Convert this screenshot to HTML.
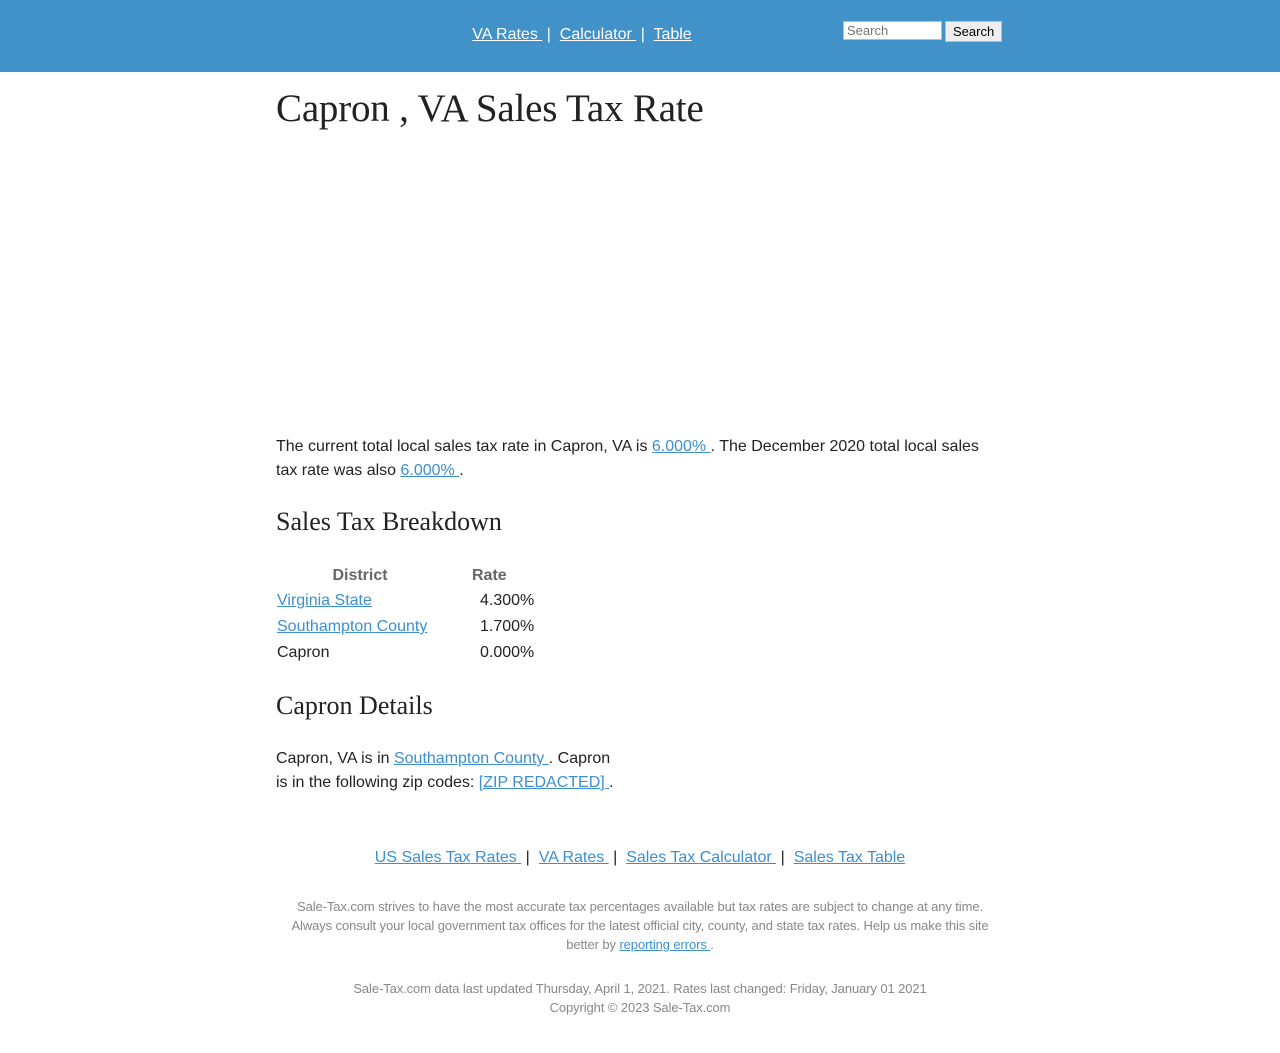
<!DOCTYPE html>
<html><head><meta charset="utf-8"><style>
body{margin:0;font-family:"Liberation Sans",sans-serif;color:#222;background:#fff}
a{color:#3d8fd0}
.hdr{background:#4192c8;height:72px;position:relative}
.nav{position:absolute;left:0;width:1164px;top:26px;text-align:center;font-size:16px;color:#fff}
.nav a{color:#fff}
.srch{position:absolute;left:843px;top:21px}
.srch input{width:91px;height:17px;border:1px solid #bbb;font:13px "Liberation Sans",sans-serif;padding:0 3px;vertical-align:top}
.srch button{height:21px;margin-left:3px;font:13px "Liberation Sans",sans-serif;background:#eee;border:1px solid #bbb;vertical-align:top;padding:0 7px}
.c{width:728px;left:276px;top:2px;position:absolute}
h1{font-family:"Liberation Serif",serif;font-weight:normal;font-size:39px;margin:0;position:absolute;letter-spacing:-0.2px;white-space:nowrap}
h2{font-family:"Liberation Serif",serif;font-weight:normal;font-size:26px;margin:0;position:absolute;white-space:nowrap}
p{font-size:16px;line-height:24px;margin:0;position:absolute}
table{position:absolute;top:562px;border-collapse:collapse;font-size:16px}
th{color:#666;height:24px;padding:0}
td{height:26px;padding:0 1px}
.f{position:absolute;width:1280px;left:0;text-align:center}
.small{font-size:13px;color:#888;line-height:19px;letter-spacing:-0.1px}
</style></head><body>
<div class="hdr"><div class="nav"><a href="#">VA Rates </a> &nbsp;|&nbsp; <a href="#">Calculator </a> &nbsp;|&nbsp; <a href="#">Table</a></div>
<div class="srch"><input placeholder="Search"><button>Search</button></div></div>
<div class="c">
<h1 style="top:84px">Capron , VA Sales Tax Rate</h1>
<p style="top:433px;width:728px">The current total local sales tax rate in Capron, VA is <a href="#">6.000% </a>. The December 2020 total local sales tax rate was also <a href="#">6.000% </a>.</p>
<h2 style="top:505px">Sales Tax Breakdown</h2>
<table><tr><th style="width:168px">District</th><th style="width:90px;text-align:left;padding-left:28px">Rate</th></tr>
<tr><td><a href="#">Virginia State</a></td><td style="padding-left:36px">4.300%</td></tr>
<tr><td><a href="#">Southampton County</a></td><td style="padding-left:36px">1.700%</td></tr>
<tr><td>Capron</td><td style="padding-left:36px">0.000%</td></tr></table>
<h2 style="top:689px">Capron Details</h2>
<p style="top:745px;width:345px">Capron, VA is in <a href="#">Southampton County </a>. Capron is in the following zip codes: <a href="#">[ZIP REDACTED] </a>.</p>
</div>
<div class="f" style="top:846px;font-size:16px;line-height:24px"><a href="#">US Sales Tax Rates </a> &nbsp;|&nbsp; <a href="#">VA Rates </a> &nbsp;|&nbsp; <a href="#">Sales Tax Calculator </a> &nbsp;|&nbsp; <a href="#">Sales Tax Table</a></div>
<div class="f small" style="top:897px;left:280px;width:720px">Sale-Tax.com strives to have the most accurate tax percentages available but tax rates are subject to change at any time. Always consult your local government tax offices for the latest official city, county, and state tax rates. Help us make this site better by <a href="#">reporting errors </a>.</div>
<div class="f small" style="top:979px">Sale-Tax.com data last updated Thursday, April 1, 2021. Rates last changed: Friday, January 01 2021<br>Copyright © 2023 Sale-Tax.com</div>
</body></html>
